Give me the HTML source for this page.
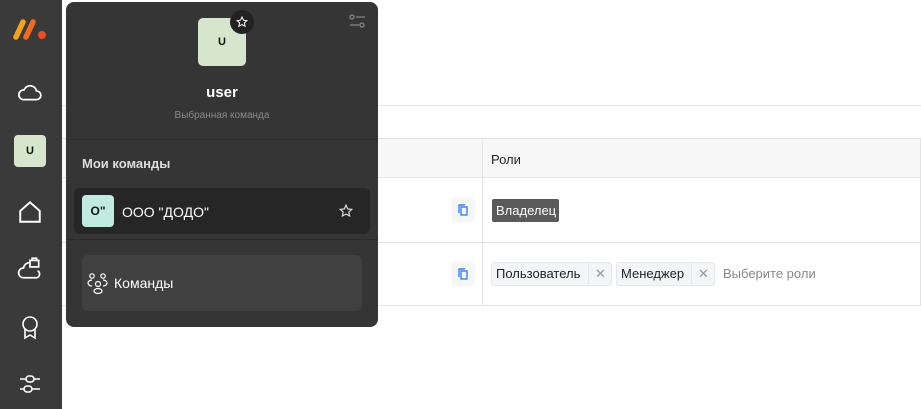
<!DOCTYPE html>
<html><head><meta charset="utf-8"><style>
*{box-sizing:border-box;margin:0;padding:0}
body{width:921px;height:409px;overflow:hidden;background:#fff;font-family:"Liberation Sans","DejaVu Sans",sans-serif;position:relative}
.sb{position:absolute;left:0;top:0;width:62px;height:409px;background:#3a3a3a}
.abs{position:absolute}
.hl{position:absolute;height:1px;background:#e3e3e3}
.vl{position:absolute;width:1px;background:#e3e3e3}
.pop{position:absolute;left:66px;top:2px;width:312px;height:325px;background:#353535;border-radius:8px;overflow:hidden}
.tag{position:absolute;height:24px;background:#f3f5f8;border:1px solid #e6e8ec;border-radius:3px;font-size:13px;color:#222;line-height:22px;padding-left:4px}
.copy{position:absolute;width:24px;height:24px;background:#f6f6f6;border-radius:3px}
</style></head><body>
<div class="sb">
 <svg class="abs" style="left:13px;top:18px" width="36" height="22" viewBox="0 0 36 22"><path d="M3 19 L10 4" stroke="#f7a21b" stroke-width="5.5" stroke-linecap="round"/><path d="M13 19 L20 4" stroke="#f26a1b" stroke-width="5.5" stroke-linecap="round"/><circle cx="29" cy="17" r="4" fill="#f04e1b"/></svg>
 <svg class="abs" style="left:17px;top:79px" width="26" height="24" viewBox="0 0 24 22" fill="none" stroke="#fff" stroke-width="1.6"><path d="M6 19h12a4 4 0 0 0 0-8 6 6 0 0 0-11.5-1A4.5 4.5 0 0 0 6 19z"/></svg>
 <div class="abs" style="left:14px;top:135px;width:32px;height:32px;background:#d6e6cc;border-radius:4px;font-size:11px;font-weight:bold;color:#111;text-align:center;line-height:32px">U</div>
 <svg class="abs" style="left:17px;top:199px" width="26" height="26" viewBox="0 0 24 24" fill="none" stroke="#fff" stroke-width="1.8"><path d="M3 11L12 3l9 8v10H3z"/></svg>
 <svg class="abs" style="left:17px;top:255px" width="26" height="26" viewBox="0 0 24 24" fill="none" stroke="#fff" stroke-width="1.6"><path d="M6 21h12a3.5 3.5 0 0 0 1-6.5M11 7a6 6 0 0 0-5 5A4.5 4.5 0 0 0 6 21"/><rect x="12" y="5" width="8" height="6"/><path d="M14 5V3h4v2"/></svg>
 <svg class="abs" style="left:20px;top:315px" width="20" height="26" viewBox="0 0 20 26" fill="none" stroke="#fff" stroke-width="1.6"><circle cx="10" cy="9" r="7"/><path d="M5 14v9l5-3 5 3v-9"/></svg>
 <svg class="abs" style="left:18px;top:372px" width="24" height="24" viewBox="0 0 24 24" fill="none" stroke="#fff" stroke-width="1.6"><path d="M2 7h6M16 7h6M2 17h4M14 17h8"/><rect x="8" y="4" width="8" height="6" rx="3"/><rect x="6" y="14" width="8" height="6" rx="3"/></svg>
</div>
<div class="hl" style="left:62px;top:105px;width:859px"></div>
<div class="abs" style="left:62px;top:138px;width:859px;height:39px;background:#f7f7f7"></div>
<div class="hl" style="left:62px;top:138px;width:859px"></div>
<div class="hl" style="left:62px;top:177px;width:859px"></div>
<div class="hl" style="left:62px;top:242px;width:859px"></div>
<div class="hl" style="left:62px;top:305px;width:859px"></div>
<div class="vl" style="left:482px;top:138px;height:168px"></div>
<div class="vl" style="left:920px;top:138px;height:168px"></div>
<div class="abs" style="left:491px;top:152px;font-size:13px;color:#222">Роли</div>
<div class="copy" style="left:451px;top:198px"></div>
<div class="copy" style="left:451px;top:262px"></div>
<svg class="abs" style="left:458px;top:204px" width="10" height="12" viewBox="0 0 10 12" fill="none" stroke="#3b82f6" stroke-width="1.4"><rect x="3" y="3" width="6" height="8"/><path d="M1 9V1h6"/></svg>
<svg class="abs" style="left:458px;top:268px" width="10" height="12" viewBox="0 0 10 12" fill="none" stroke="#3b82f6" stroke-width="1.4"><rect x="3" y="3" width="6" height="8"/><path d="M1 9V1h6"/></svg>
<div class="abs" style="left:492px;top:199px;width:67px;height:23px;background:#5a5a5a;border-radius:2px;color:#fff;font-size:13px;line-height:23px;padding-left:4px">Владелец</div>
<div class="tag" style="left:491px;top:262px;width:121px">Пользователь<span style="position:absolute;left:96px;top:0;height:22px;border-left:1px solid #e3e5e9;width:24px;text-align:center;color:#999">✕</span></div>
<div class="tag" style="left:616px;top:262px;width:99px">Менеджер<span style="position:absolute;left:74px;top:0;height:22px;border-left:1px solid #e3e5e9;width:24px;text-align:center;color:#999">✕</span></div>
<div class="abs" style="left:723px;top:266px;font-size:13px;color:#888">Выберите роли</div>

<div class="pop">
 <div class="abs" style="left:0;top:137px;width:312px;height:1px;background:#2c2c2c"></div>
 <div class="abs" style="left:0;top:237px;width:312px;height:1px;background:#2c2c2c"></div>
 <div class="abs" style="left:132px;top:16px;width:48px;height:48px;background:#d6e6cc;border-radius:5px;font-size:11px;font-weight:bold;color:#111;text-align:center;line-height:48px">U</div>
 <div class="abs" style="left:164px;top:8px;width:24px;height:24px;background:#222;border-radius:12px"></div>
 <svg class="abs" style="left:170px;top:14px" width="12" height="12" viewBox="0 0 12 12" fill="none" stroke="#fff" stroke-width="1"><path d="M6 1l1.5 3.2 3.4.4-2.5 2.3.7 3.4L6 8.6 2.9 10.3l.7-3.4L1.1 4.6l3.4-.4z"/></svg>
 <svg class="abs" style="left:283px;top:12px" width="17" height="15" viewBox="0 0 17 15" fill="none" stroke="#888" stroke-width="1.3"><circle cx="3" cy="3" r="2"/><path d="M7 3h9M1 11h9"/><circle cx="13" cy="11" r="2"/></svg>
 <div class="abs" style="left:0;top:82px;width:312px;text-align:center;color:#fff;font-weight:bold;font-size:15px">user</div>
 <div class="abs" style="left:0;top:108px;width:312px;text-align:center;color:#8a8a8a;font-size:10px">Выбранная команда</div>
 <div class="abs" style="left:16px;top:154px;color:#ddd;font-size:13px;font-weight:bold">Мои команды</div>
 <div class="abs" style="left:8px;top:186px;width:296px;height:46px;background:#262626;border-radius:6px"></div>
 <div class="abs" style="left:16px;top:193px;width:32px;height:32px;background:#c0ece0;border-radius:4px;font-size:12px;font-weight:bold;color:#111;text-align:center;line-height:32px">О"</div>
 <div class="abs" style="left:56px;top:202px;color:#fff;font-size:14px">ООО "ДОДО"</div>
 <svg class="abs" style="left:273px;top:202px" width="14" height="14" viewBox="0 0 12 12" fill="none" stroke="#ddd" stroke-width="1"><path d="M6 1l1.5 3.2 3.4.4-2.5 2.3.7 3.4L6 8.6 2.9 10.3l.7-3.4L1.1 4.6l3.4-.4z"/></svg>
 <div class="abs" style="left:16px;top:253px;width:280px;height:56px;background:#404040;border-radius:6px"></div>
 <svg class="abs" style="left:21px;top:271px" width="22" height="22" viewBox="0 0 22 22" fill="none" stroke="#fff" stroke-width="1.2"><circle cx="5" cy="3" r="2.2"/><circle cx="16" cy="3" r="2.2"/><circle cx="11" cy="11" r="2.5"/><ellipse cx="11" cy="18" rx="4" ry="2.5"/><path d="M5 7a4 3 0 0 0-4 3 4 3 0 0 0 4 3M16 7a4 3 0 0 1 4 3 4 3 0 0 1-4 3"/></svg>
 <div class="abs" style="left:48px;top:273px;color:#fff;font-size:14px">Команды</div>
</div>
</body></html>
